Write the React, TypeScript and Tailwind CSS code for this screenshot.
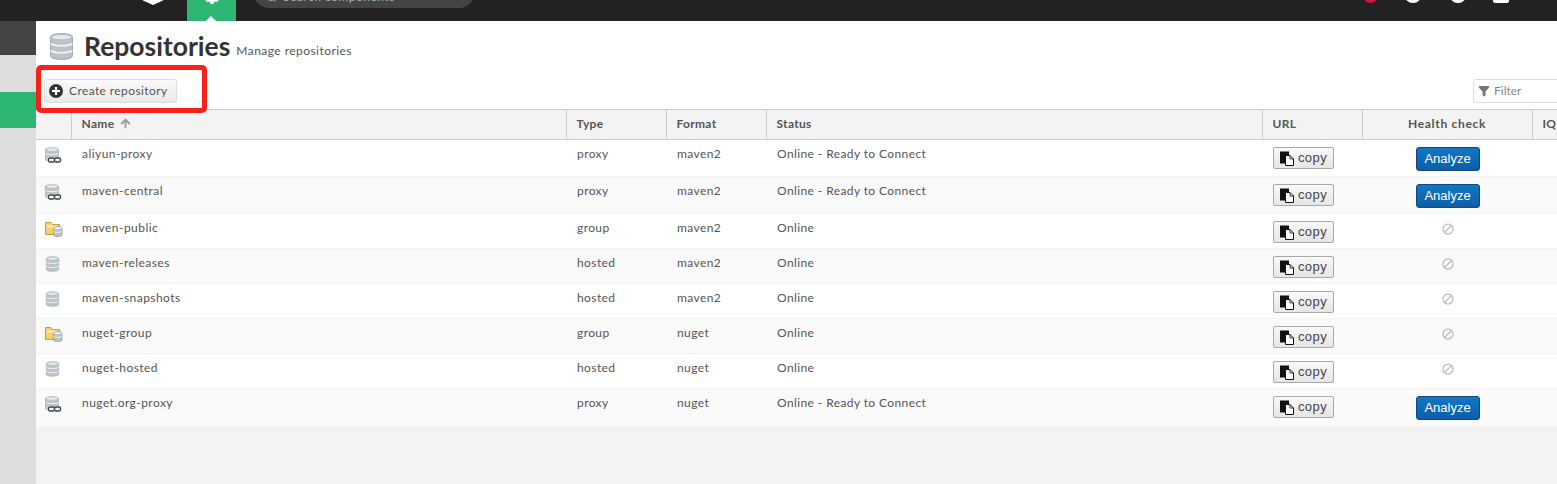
import { ArrowUp, Ban, Filter, Search, Settings } from 'lucide-react'

type Repo = { name: string; type: string; format: string; status: string; analyze: boolean; h: string }

const repos: Repo[] = [
  { name: 'aliyun-proxy', type: 'proxy', format: 'maven2', status: 'Online - Ready to Connect', analyze: true, h: 'h-[37px]' },
  { name: 'maven-central', type: 'proxy', format: 'maven2', status: 'Online - Ready to Connect', analyze: true, h: 'h-[37px]' },
  { name: 'maven-public', type: 'group', format: 'maven2', status: 'Online', analyze: false, h: 'h-[35px]' },
  { name: 'maven-releases', type: 'hosted', format: 'maven2', status: 'Online', analyze: false, h: 'h-[35px]' },
  { name: 'maven-snapshots', type: 'hosted', format: 'maven2', status: 'Online', analyze: false, h: 'h-[35px]' },
  { name: 'nuget-group', type: 'group', format: 'nuget', status: 'Online', analyze: false, h: 'h-[35px]' },
  { name: 'nuget-hosted', type: 'hosted', format: 'nuget', status: 'Online', analyze: false, h: 'h-[35px]' },
  { name: 'nuget.org-proxy', type: 'proxy', format: 'nuget', status: 'Online - Ready to Connect', analyze: true, h: 'h-[38px]' },
]

function DbIcon({ w = 16, h = 18 }: { w?: number; h?: number }) {
  return (
    <svg width={w} height={h} viewBox="0 0 16 18">
      <path d="M1 3c0-3 14-3 14 0v12c0 3-14 3-14 0z" fill="#bcc3ca" stroke="#98a0a8" strokeWidth="0.6" />
      <ellipse cx="8" cy="3" rx="6.500" ry="1.700" fill="#e6e9ec" stroke="#a5acb3" strokeWidth="0.4" />
      <path d="M1 7c2 2 12 2 14 0M1 11.500c2 2 12 2 14 0" fill="none" stroke="#f4f5f7" strokeWidth="1" />
    </svg>
  )
}

function RepoIcon({ type }: { type: string }) {
  if (type === 'group') {
    return (
      <svg width="18" height="16" viewBox="0 0 18 16">
        <path d="M0.500 1.500h5.500l1.500 2h7v10h-14z" fill="#f5cf6c" stroke="#cf9f32" strokeWidth="1" />
        <path d="M2 5.500h11" stroke="#fcf0c0" strokeWidth="2" />
        <path d="M8.500 7c0-2 8.500-2 8.500 0v7c0 2-8.500 2-8.500 0z" fill="#bcc3ca" stroke="#8f979f" strokeWidth="0.7" />
        <ellipse cx="12.750" cy="7" rx="4" ry="1.100" fill="#eceef0" />
        <path d="M8.500 10.500c1 1.200 7.500 1.200 8.500 0" stroke="#f2f3f5" strokeWidth="0.8" fill="none" />
      </svg>
    )
  }
  if (type === 'proxy') {
    return (
      <svg width="17" height="17" viewBox="0 0 17 17">
        <path d="M0.500 2.500c0-2.500 13-2.500 13 0v10c0 2.500-13 2.500-13 0z" fill="#bcc3ca" stroke="#98a0a8" strokeWidth="0.6" />
        <ellipse cx="7" cy="2.500" rx="5.500" ry="1.300" fill="#e8ebee" />
        <path d="M0.500 6.500c2 1.500 11 1.500 13 0" stroke="#f2f4f6" fill="none" />
        <rect x="2.500" y="10" width="14" height="6" rx="1.500" fill="#f4f4f4" />
        <rect x="3.500" y="11" width="6" height="4" rx="1.500" fill="none" stroke="#3c4045" strokeWidth="1.300" />
        <rect x="9.500" y="11" width="6" height="4" rx="1.500" fill="none" stroke="#3c4045" strokeWidth="1.300" />
      </svg>
    )
  }
  return <DbIcon w={15} h={16} />
}

function CopyIcon() {
  return (
    <svg width="14" height="15" viewBox="0 0 14 15">
      <rect x="0" y="0.500" width="9" height="12" fill="#111" />
      <path d="M5.500 4.500h4.500l3.500 3.500v6.500h-8z" fill="#fff" stroke="#111" strokeWidth="1" />
      <path d="M10 4.500v3.500h3.500" fill="none" stroke="#111" strokeWidth="0.8" />
    </svg>
  )
}

function PlusBadge() {
  return (
    <svg width="14" height="14" viewBox="0 0 14 14">
      <circle cx="7" cy="7" r="7" fill="#333" />
      <path d="M7 3v8M3 7h8" stroke="#fff" strokeWidth="2.200" />
    </svg>
  )
}

export default function App() {
  return (
    <div className="w-[1557px] h-[484px] overflow-hidden flex flex-col text-[#555] font-['Lato','Liberation_Sans',sans-serif] text-xs">
      {/* top bar, cut off by the screenshot */}
      <header className="h-[21px] shrink-0 bg-[#222] flex items-start overflow-hidden">
        <div className="ml-[142px] w-[22px] h-[21px] flex justify-center overflow-hidden">
          <svg width="22" height="21" viewBox="0 0 22 21" className="shrink-0">
            <path d="M1 -2l10 -4 10 4v2.500l-10 4.500-10-4.500z" fill="#fff" />
          </svg>
        </div>
        <div className="ml-[23px] w-[49px] h-[21px] bg-[#2cb573] flex justify-center items-start relative overflow-hidden">
          <Settings size={16} className="text-white -mt-[11px] shrink-0" fill="#fff" />
          <div className="absolute bottom-0 left-[19px] w-0 h-0 border-x-[5px] border-x-transparent border-b-[5px] border-b-white" />
        </div>
        <div className="ml-[18px] w-[220px] h-[29px] -mt-[21px] shrink-0 rounded-full bg-[#444] flex items-end pb-[3px] pl-3 gap-[6px] text-[#aaa]">
          <Search size={11} className="shrink-0 mb-[2px]" />
          <span className="tracking-[0.5px]">Search components</span>
        </div>
        <div className="ml-[886px] w-[20px] h-[21px] relative overflow-hidden">
          <div className="absolute -top-[12px] left-[3px] w-[15px] h-[15px] rounded-full bg-[#d3123e]" />
        </div>
        <div className="ml-[23px] w-[20px] h-[21px] relative overflow-hidden">
          <div className="absolute -top-[12px] left-[2px] w-[16px] h-[15px] rounded-full border-[3px] border-white" />
        </div>
        <div className="ml-[25px] w-[20px] h-[21px] relative overflow-hidden">
          <div className="absolute -top-[12px] left-[2px] w-[16px] h-[15px] rounded-full border-[3px] border-white" />
        </div>
        <div className="ml-[23px] w-[20px] h-[21px] relative overflow-hidden">
          <div className="absolute -top-[12px] left-[2px] w-[16px] h-[15px] rounded-[2px] bg-white" />
        </div>
      </header>

      <div className="flex flex-1 min-h-0">
        <aside className="w-9 shrink-0 bg-[#ddd] flex flex-col">
          <div className="h-[34px] bg-[#444]" />
          <div className="h-[37px]" />
          <div className="h-9 bg-[#2cb573]" />
        </aside>

        <main className="flex-1 min-w-0 bg-[#f3f3f3] relative">
          <div className="bg-white h-[88px] flex flex-col">
            <div className="flex items-start h-[46px] pl-[13px] pt-[11px] shrink-0">
              <DbIcon w={25} h={29} />
              <h1 className="ml-[10px] -mt-[1px] text-[26.500px] leading-[30px] font-bold text-[#333]">Repositories</h1>
              <span className="ml-[6px] mt-[11px] text-xs tracking-[0.45px]">Manage repositories</span>
            </div>
            <div className="flex items-start justify-between pl-2 mt-3">
              <button className="h-[24px] w-[133px] flex items-center pl-[4px] gap-[6px] border border-[#ddd] rounded-[3px] bg-gradient-to-b from-[#fafafa] to-[#e9e9e9] tracking-[0.4px]">
                <PlusBadge />
                Create repository
              </button>
              <div className="h-6 w-[100px] shrink-0 flex items-center gap-[4px] pl-1 border border-[#ddd] rounded-l-[3px] text-[#888] ml-auto mr-[-16px]">
                <Filter size={12} fill="#777" className="text-[#777]" />
                Filter
              </div>
            </div>
          </div>

          <table className="table-fixed border-collapse w-[1540px] bg-white">
            <colgroup>
              <col className="w-[35px]" />
              <col className="w-[495px]" />
              <col className="w-[100px]" />
              <col className="w-[100px]" />
              <col className="w-[496px]" />
              <col className="w-[100px]" />
              <col className="w-[170px]" />
              <col />
            </colgroup>
            <thead>
              <tr className="h-[30px] bg-[#f3f3f3] border-y border-[#ccc] text-left font-bold text-[#555] tracking-[0.3px]">
                <th />
                <th className="border-l border-[#ccc] pl-[10px] pb-[2px]">
                  <span className="inline-flex items-center gap-[5px]">
                    Name <ArrowUp size={13} strokeWidth={3.500} className="text-[#999]" />
                  </span>
                </th>
                <th className="border-l border-[#ccc] pl-[10px] pb-[2px]">Type</th>
                <th className="border-l border-[#ccc] pl-[10px] pb-[2px]">Format</th>
                <th className="border-l border-[#ccc] pl-[10px] pb-[2px]">Status</th>
                <th className="border-l border-[#ccc] pl-[10px] pb-[2px]">URL</th>
                <th className="border-l border-[#ccc] pb-[2px] text-center tracking-[0.7px]">Health check</th>
                <th className="border-l border-[#ccc] pl-[10px] pb-[2px]">IQ</th>
              </tr>
            </thead>
            <tbody>
              {repos.map((r, i) => (
                <tr key={r.name} className={`${r.h} ${i % 2 === 1 ? 'bg-[#fafafa]' : 'bg-white'} border-b border-[#f3f3f3]`}>
                  <td className="pl-[9px] align-top pt-[7px]">
                    <RepoIcon type={r.type} />
                  </td>
                  <td className="pl-[11px] align-top pt-[6px] tracking-[0.45px]">{r.name}</td>
                  <td className="pl-[11px] align-top pt-[6px] tracking-[0.4px]">{r.type}</td>
                  <td className="pl-[11px] align-top pt-[6px] tracking-[0.4px]">{r.format}</td>
                  <td className="pl-[11px] align-top pt-[6px] tracking-[0.4px]">{r.status}</td>
                  <td className="pl-[11px] align-top pt-[7px]">
                    <button className="w-[61px] h-[22px] flex items-center justify-center gap-[4px] border border-[#aaa] rounded-[2px] bg-gradient-to-b from-[#f8f8f8] to-[#e6e6e6] text-[#444] text-[13px] tracking-[0.4px] font-['Liberation_Sans',sans-serif]">
                      <CopyIcon /> copy
                    </button>
                  </td>
                  <td className="align-top pt-[7px] pl-[1px] text-center">
                    {r.analyze ? (
                      <button className="w-16 h-6 rounded-[3px] border border-[#14487c] bg-gradient-to-b from-[#1277c4] to-[#0d5ea8] text-white text-[13px] font-['Liberation_Sans',sans-serif]">
                        Analyze
                      </button>
                    ) : (
                      <Ban size={12} strokeWidth={2.500} className="text-[#bbb] inline-block -mt-[2px] -scale-x-100" />
                    )}
                  </td>
                  <td />
                </tr>
              ))}
            </tbody>
          </table>

          {/* red annotation drawn over the screenshot */}
          <div className="absolute left-0 top-[44px] w-[171px] h-[48px] border-[5px] border-[#f9221a] rounded-[5px]" />
        </main>
      </div>
    </div>
  )
}
